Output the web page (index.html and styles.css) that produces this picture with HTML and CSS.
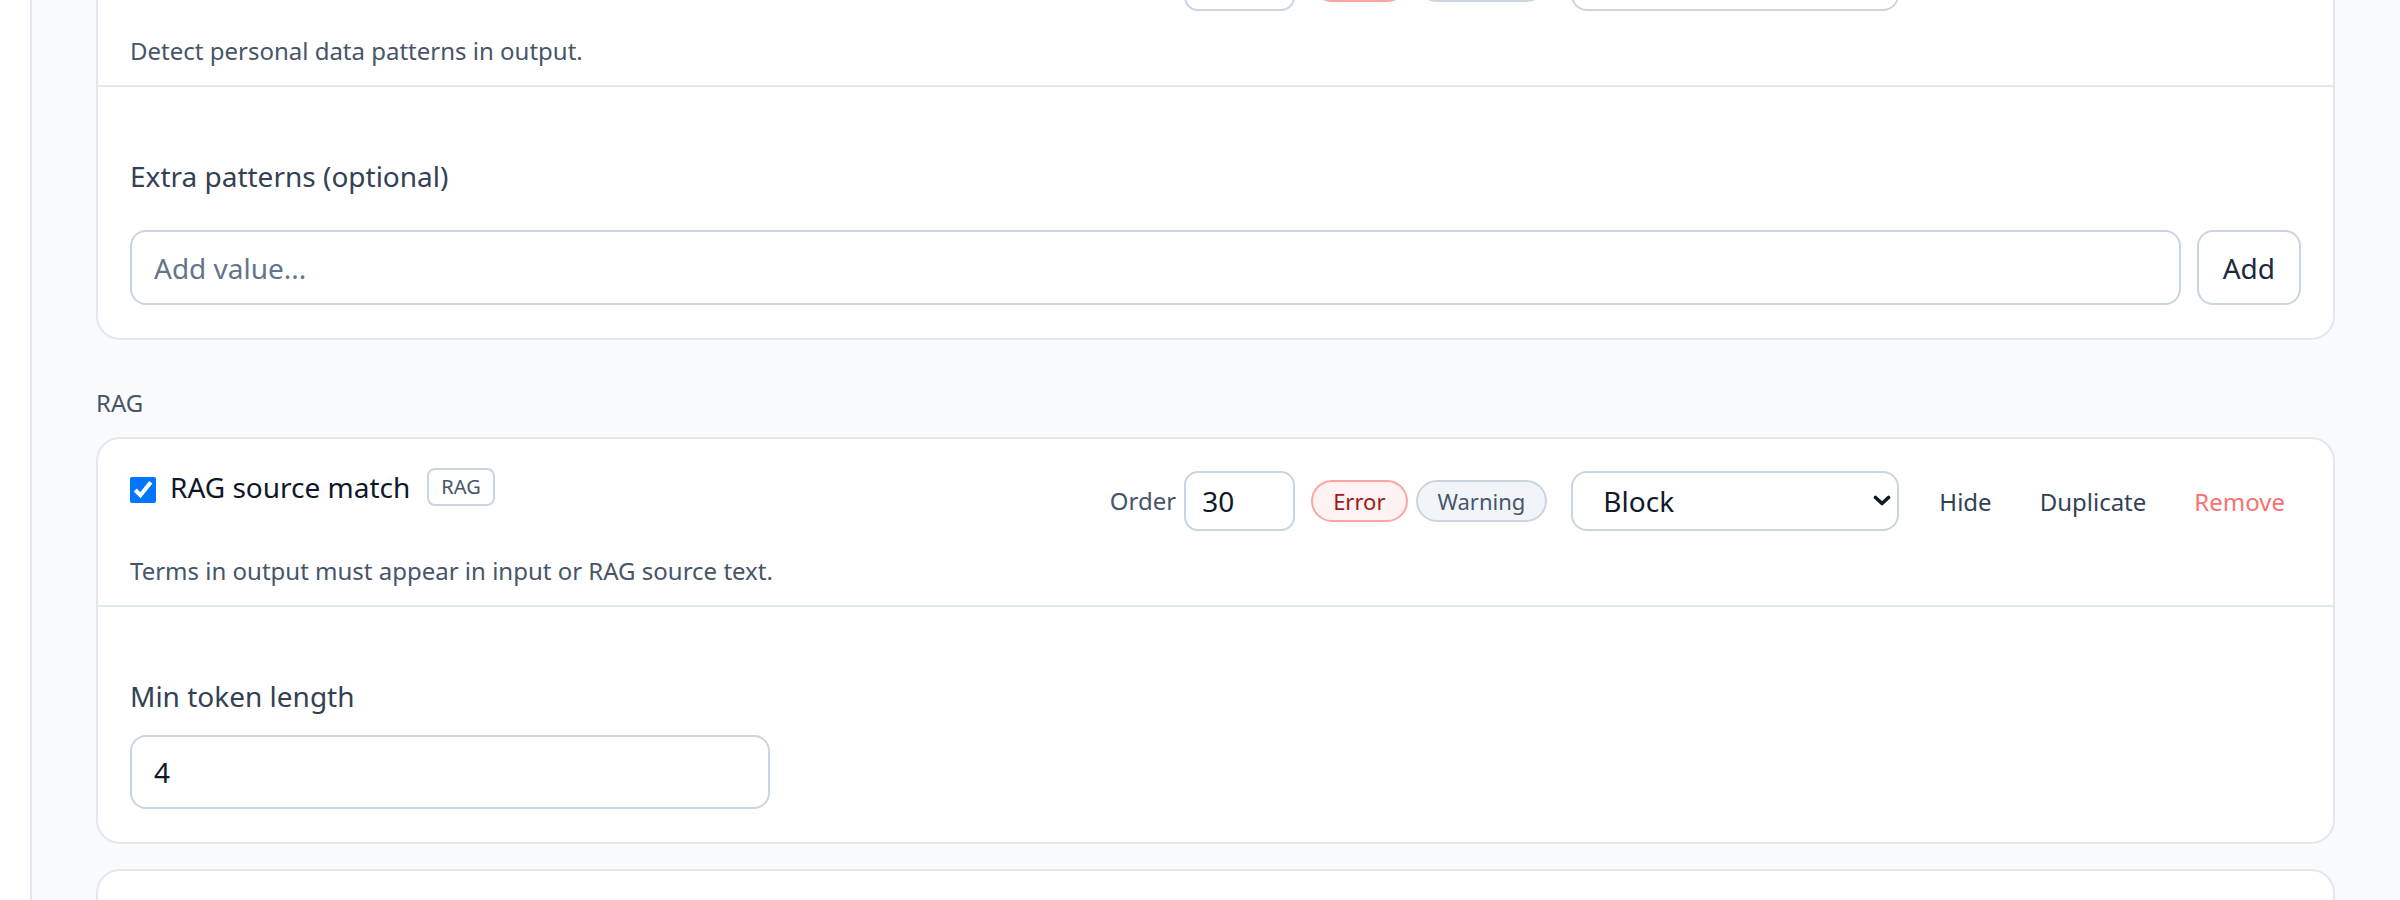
FILE: index.html
```html
<!DOCTYPE html>
<html lang="en">
<head>
<meta charset="utf-8">
<title>Rules</title>
<link rel="stylesheet" href="styles.css">
</head>
<body>
<div class="app">
  <aside class="sidebar"></aside>
  <main class="main">
    <div class="scroll">
      <section class="group">
        <article class="rule">
          <header class="rule-head">
            <div class="rule-top">
              <label class="rule-title">
                <input type="checkbox" class="check" checked>
                <span class="name">PII detection</span>
                <span class="tag">PII</span>
              </label>
              <div class="rule-controls">
                <span class="ctl-label">Order</span>
                <input class="order" type="text" value="20">
                <button class="sev sev-error">Error</button>
                <button class="sev sev-warning">Warning</button>
                <span class="select-wrap">
                  <select class="action"><option>Block</option><option>Flag</option></select>
                  <svg class="chev" width="18" height="11" viewBox="0 0 18 11"><path d="M2.5 2.5 9 8.5 15.5 2.5" fill="none" stroke="#111827" stroke-width="3.6" stroke-linecap="round" stroke-linejoin="round"/></svg>
                </span>
                <button class="link">Hide</button>
                <button class="link">Duplicate</button>
                <button class="link link-danger">Remove</button>
              </div>
            </div>
            <p class="rule-desc">Detect personal data patterns in output.</p>
          </header>
          <div class="rule-body">
            <label class="field-label field-label-list">Extra patterns (optional)</label>
            <div class="add-row">
              <input class="text-input grow" type="text" placeholder="Add value...">
              <button class="btn">Add</button>
            </div>
          </div>
        </article>
      </section>

      <section class="group">
        <h3 class="group-title">RAG</h3>
        <article class="rule">
          <header class="rule-head">
            <div class="rule-top">
              <label class="rule-title">
                <input type="checkbox" class="check" checked>
                <span class="name">RAG source match</span>
                <span class="tag">RAG</span>
              </label>
              <div class="rule-controls">
                <span class="ctl-label">Order</span>
                <input class="order" type="text" value="30">
                <button class="sev sev-error">Error</button>
                <button class="sev sev-warning">Warning</button>
                <span class="select-wrap">
                  <select class="action"><option>Block</option><option>Flag</option></select>
                  <svg class="chev" width="18" height="11" viewBox="0 0 18 11"><path d="M2.5 2.5 9 8.5 15.5 2.5" fill="none" stroke="#111827" stroke-width="3.6" stroke-linecap="round" stroke-linejoin="round"/></svg>
                </span>
                <button class="link">Hide</button>
                <button class="link">Duplicate</button>
                <button class="link link-danger">Remove</button>
              </div>
            </div>
            <p class="rule-desc">Terms in output must appear in input or RAG source text.</p>
          </header>
          <div class="rule-body">
            <label class="field-label">Min token length</label>
            <input class="text-input narrow" type="text" value="4">
          </div>
        </article>
        <article class="rule rule-next"></article>
      </section>
    </div>
  </main>
</div>
</body>
</html>
```

FILE: styles.css
```css
* { box-sizing: border-box; }

html, body {
  margin: 0;
  height: 100%;
}

body {
  font-family: "Noto Sans", "Open Sans", sans-serif;
  background: #f8fafc;
  color: #0f172a;
  overflow: hidden;
}

.app {
  display: flex;
  min-height: 100vh;
}

.sidebar {
  width: 32px;
  flex: none;
  background: #ffffff;
  border-right: 2px solid #e2e8f0;
}

.main {
  flex: 1;
  min-width: 0;
  padding: 0 65px 0 64px;
}

.scroll {
  margin-top: -83px;
}

.group-title {
  margin: 45px 0 16px;
  font-size: 24px;
  line-height: 36px;
  font-weight: 400;
  color: #475569;
}

.rule {
  background: #ffffff;
  border: 2px solid #e2e8f0;
  border-radius: 24px;
}

.rule + .rule {
  margin-top: 25px;
}

.rule-next {
  height: 120px;
}

.rule-head {
  padding: 27px 32px 16px;
}

.rule-top {
  display: flex;
  align-items: flex-start;
  justify-content: space-between;
}

.rule-title {
  display: flex;
  align-items: center;
  height: 42px;
}

.check {
  width: 26px;
  height: 26px;
  margin: 6px 14px 0 0;
  accent-color: #0075ff;
}

.name {
  font-size: 28px;
  line-height: 42px;
  color: #0f172a;
}

.tag {
  margin-left: 17px;
  height: 38px;
  padding: 0 12px;
  border: 2px solid #cbd5e1;
  border-radius: 8px;
  font-size: 20px;
  line-height: 34px;
  color: #475569;
}

.rule-controls {
  display: flex;
  align-items: center;
  margin-top: 5px;
}

.ctl-label {
  font-size: 24px;
  line-height: 36px;
  color: #475569;
  margin-right: 8px;
}

.order {
  width: 111px;
  height: 60px;
  padding: 0 16px;
  border: 2px solid #cbd5e1;
  border-radius: 14px;
  font: inherit;
  font-size: 28px;
  color: #0f172a;
  background: #ffffff;
  margin-right: 16px;
}

.sev {
  height: 42px;
  padding: 0 20px;
  border: 2px solid;
  border-radius: 999px;
  font: inherit;
  font-size: 22px;
  line-height: 36px;
}

.sev-error {
  background: #fef2f2;
  border-color: #fca5a5;
  color: #991b1b;
}

.sev-warning {
  margin-left: 8px;
  background: #f1f5f9;
  border-color: #cbd5e1;
  color: #475569;
}

.select-wrap {
  position: relative;
  display: inline-flex;
  margin: 0 24px;
}

.action {
  appearance: none;
  -webkit-appearance: none;
  width: 328px;
  height: 60px;
  padding: 0 40px 0 30px;
  border: 2px solid #cbd5e1;
  border-radius: 16px;
  background: #ffffff;
  font: inherit;
  font-size: 28px;
  color: #0f172a;
}

.chev {
  position: absolute;
  right: 8px;
  top: 24px;
  pointer-events: none;
}

.link {
  height: 60px;
  padding: 0 16px;
  border: 0;
  background: none;
  font: inherit;
  font-size: 24px;
  color: #334155;
}

.link + .link {
  margin-left: 16px;
}

.link-danger {
  color: #f87171;
}

.rule-desc {
  margin: 22px 0 0;
  font-size: 24px;
  line-height: 36px;
  color: #475569;
}

.rule-body {
  border-top: 2px solid #e2e8f0;
  padding: 68px 32px 33px;
}

.field-label {
  display: block;
  font-size: 28px;
  line-height: 42px;
  color: #334155;
  margin-bottom: 18px;
}

.field-label-list {
  margin-bottom: 33px;
}

.add-row {
  display: flex;
  gap: 16px;
}

.text-input {
  height: 75px;
  padding: 0 22px;
  border: 2px solid #cbd5e1;
  border-radius: 16px;
  background: #ffffff;
  font: inherit;
  font-size: 28px;
  color: #0f172a;
}

.text-input::placeholder {
  color: #64748b;
}

.grow {
  flex: 1;
  min-width: 0;
}

.narrow {
  width: 640px;
  height: 74px;
  display: block;
}

.btn {
  height: 75px;
  padding: 0 24px;
  border: 2px solid #cbd5e1;
  border-radius: 16px;
  background: #ffffff;
  font: inherit;
  font-size: 28px;
  color: #1e293b;
}
```
